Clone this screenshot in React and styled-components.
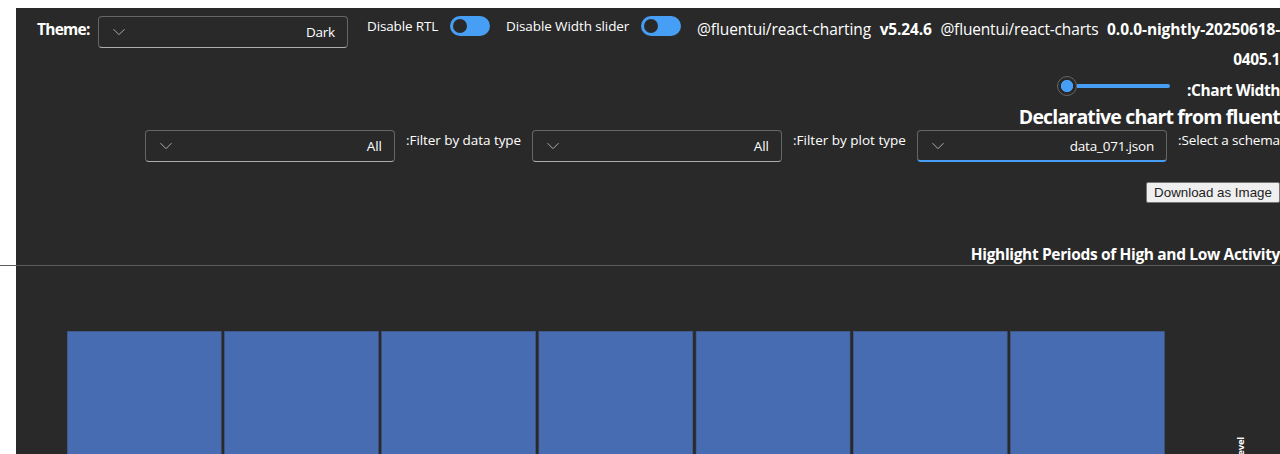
import React from "react";
import styled, { createGlobalStyle } from "styled-components";

const GlobalStyle = createGlobalStyle`
  html, body { margin: 0; background: #fff; height: 454px; overflow: hidden; }
  * { box-sizing: border-box; }
  body { font-family: "Open Sans", "Noto Sans", sans-serif; color: #fff; }
`;

const Viewport = styled.div`
  display: flow-root;
  height: 454px;
  overflow: hidden;
`;

const Page = styled.main`
  margin: 8px 0 0 16px;
  height: 446px;
  background: #292929;
`;

const TopBar = styled.header`
  display: flex;
  align-items: flex-start;
  height: 68px;
  padding: 8px 0 0 21px;
`;

const Label = styled.span`
  flex: none;
  width: ${(p) => p.$w}px;
  font-size: 13.5px;
  line-height: 20px;
  letter-spacing: ${(p) => p.$ls || 0}px;
  white-space: nowrap;
`;

const StrongLabel = styled(Label)`
  font-size: 15.5px;
  line-height: ${(p) => p.$lh || 28}px;
  font-weight: 700;
`;

const SelectBox = styled.div`
  flex: none;
  display: flex;
  align-items: center;
  justify-content: space-between;
  width: 250px;
  height: 32px;
  padding: 0 12px 0 14px;
  border: 1px solid #666;
  border-bottom: ${(p) => (p.$active ? "2px solid #479ef5" : "1px solid #adadad")};
  border-radius: 4px;
  font-size: 13.5px;
  line-height: 20px;
`;

const SelectValue = styled.span`
  letter-spacing: ${(p) => p.$ls || 0}px;
`;

const Toggle = styled.span`
  flex: none;
  display: flex;
  align-items: center;
  width: 40px;
  height: 20px;
  padding-left: 3px;
  border-radius: 10px;
  background: #479ef5;
  &::before {
    content: "";
    width: 14px;
    height: 14px;
    border-radius: 50%;
    background: #292929;
  }
`;

const Field = styled.div`
  display: flex;
  flex: none;
  gap: 12px;
  margin-left: ${(p) => p.$ml || 0}px;
`;

const Versions = styled.div`
  display: grid;
  grid-template-columns: 174px 52px 158px 173px;
  column-gap: 8.7px;
  margin-left: 16px;
  font-size: 15.5px;
  line-height: 30px;
  margin-top: -2px;
  white-space: nowrap;
`;

const Version = styled.span`
  font-weight: ${(p) => (p.$bold ? 700 : 400)};
  letter-spacing: ${(p) => p.$ls}px;
  grid-column: ${(p) => p.$col || "auto"};
  justify-self: ${(p) => (p.$col ? "end" : "start")};
`;

const WidthRow = styled.div`
  display: flex;
  justify-content: flex-end;
  height: 31px;
`;

const Slider = styled.div`
  display: flex;
  align-items: center;
  width: 113px;
  height: 20px;
  margin-right: 17px;
`;

const Thumb = styled.span`
  flex: none;
  width: 20px;
  height: 20px;
  border: 1px solid #666;
  border-radius: 50%;
  background: radial-gradient(circle, #479ef5 5.8px, #292929 6.4px);
`;

const Rail = styled.span`
  flex: 1;
  height: 4px;
  border-radius: 0 2px 2px 0;
  background: #479ef5;
`;

const PageTitle = styled.h2`
  margin: 0;
  height: 23px;
  font-size: 19.5px;
  font-weight: 700;
  line-height: 20px;
  letter-spacing: -0.83px;
  text-align: right;
  white-space: nowrap;
`;

const Filters = styled.div`
  display: flex;
  height: 52px;
  padding-left: 129px;
`;

const Filter = styled.div`
  display: flex;
  flex: none;
  gap: 11px;
  margin-right: 11px;
`;

const Actions = styled.div`
  display: flex;
  justify-content: flex-end;
  height: 60px;
`;

const Button = styled.button`
  width: 134px;
  height: 21px;
  padding: 0;
  border: 1px solid #767676;
  border-radius: 2px;
  background: #efefef;
  color: #222;
  font: 13.333px "Liberation Sans", Arial, sans-serif;
  white-space: nowrap;
`;

const ChartTitle = styled.h3`
  margin: 0;
  height: 23px;
  font-size: 15.5px;
  font-weight: 700;
  line-height: 24px;
  letter-spacing: -0.35px;
  text-align: right;
  white-space: nowrap;
`;

const Divider = styled.hr`
  margin: 0 0 0 -16px;
  border: 0;
  height: 1px;
  background: #5c5c5c;
`;

const ChartArea = styled.svg`
  display: block;
`;

const Chevron = () => (
  <svg width="12" height="8" viewBox="0 0 12 8" fill="none" stroke="#adadad" strokeWidth="1">
    <path d="M0.5 1.2 L6 6.7 L11.5 1.2" />
  </svg>
);

const Select = ({ value, ls, active }) => (
  <SelectBox $active={active}>
    <Chevron />
    <SelectValue $ls={ls}>{value}</SelectValue>
  </SelectBox>
);

const filters = [
  { label: ":Filter by data type", value: "All", w: 115, ls: -0.06 },
  { label: ":Filter by plot type", value: "All", w: 113, ls: 0 },
  { label: ":Select a schema", value: "data_071.json", w: 102, ls: -0.13, vls: -0.2, active: true },
];

export default function App() {
  return (
    <Viewport>
      <GlobalStyle />
      <Page>
        <TopBar>
          <StrongLabel $w={61} $ls={-0.75} $lh={26}>Theme:</StrongLabel>
          <Select value="Dark" ls={-0.2} />
          <Field $ml={19}>
            <Label $w={71} $ls={-0.15}>Disable RTL</Label>
            <Toggle />
          </Field>
          <Field $ml={16}>
            <Label $w={123} $ls={-0.1}>Disable Width slider</Label>
            <Toggle />
          </Field>
          <Versions>
            <Version $ls={-0.09}>@fluentui/react-charting</Version>
            <Version $bold $ls={-0.15}>v5.24.6</Version>
            <Version $ls={-0.17}>@fluentui/react-charts</Version>
            <Version $bold $ls={-0.1}>0.0.0-nightly-20250618-</Version>
            <Version $bold $ls={-0.3} $col={4}>0405.1</Version>
          </Versions>
        </TopBar>
        <WidthRow>
          <Slider>
            <Thumb />
            <Rail />
          </Slider>
          <StrongLabel $w={93} $ls={-0.42}>:Chart Width</StrongLabel>
        </WidthRow>
        <PageTitle>Declarative chart from fluent</PageTitle>
        <Filters>
          {filters.map((f) => (
            <Filter key={f.label}>
              <Select value={f.value} ls={f.vls} active={f.active} />
              <Label $w={f.w} $ls={f.ls}>{f.label}</Label>
            </Filter>
          ))}
        </Filters>
        <Actions>
          <Button>Download as Image</Button>
        </Actions>
        <ChartTitle>Highlight Periods of High and Low Activity</ChartTitle>
        <Divider />
        <ChartArea width="1264" height="188">
          {[0, 1, 2, 3, 4, 5, 6].map((i) => (
            <rect key={i} x={51.3 + i * 157.2} y="65.3" width="153.9" height="140" fill="#476cb1" stroke="#435a8a" strokeWidth="0.6" />
          ))}
          <text transform="translate(1228 171) rotate(-90)" textAnchor="end" fontSize="9.5" fontWeight="700" letterSpacing="-0.2" fill="#fff">Level</text>
        </ChartArea>
      </Page>
    </Viewport>
  );
}
